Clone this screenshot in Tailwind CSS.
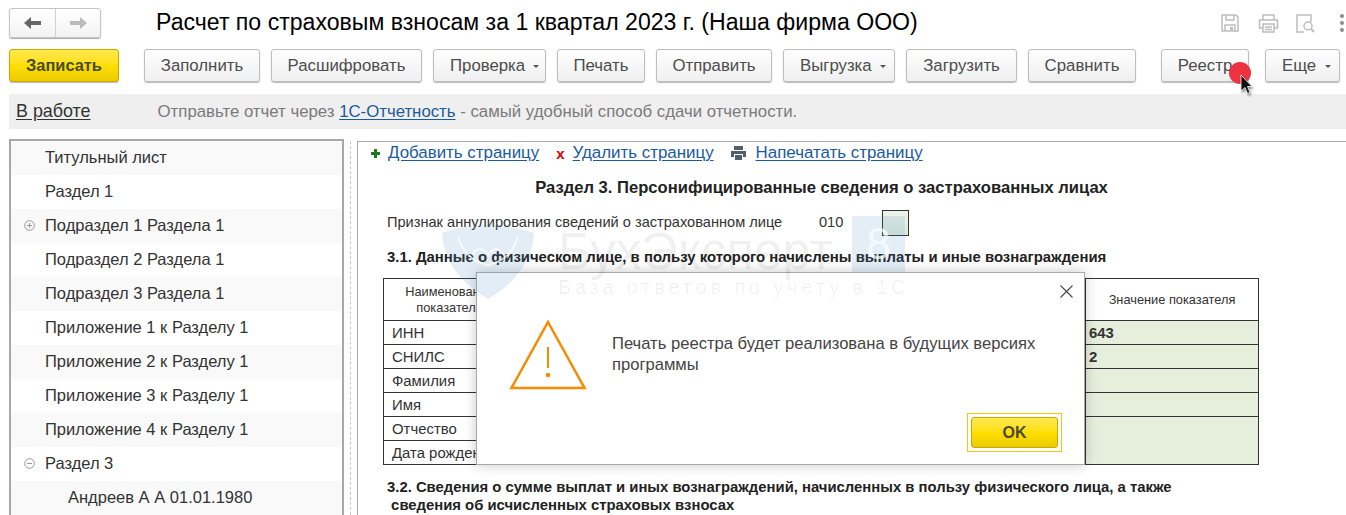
<!DOCTYPE html>
<html lang="ru">
<head>
<meta charset="utf-8">
<title>Расчет по страховым взносам</title>
<script src="https://cdn.jsdelivr.net/npm/@tailwindcss/browser@4"></script>
</head>
<body class="bg-white">
<div class="relative w-[1346px] h-[515px] overflow-hidden bg-white font-['Liberation_Sans',sans-serif] text-[#333]">

  <!-- title row -->
  <div class="flex items-center h-[49px] pl-[9px] pb-[3px]">
    <div class="flex w-[92px] h-[30px] rounded-[3px] border border-[#c4c4c4] shadow-[0_1px_1px_#aaa] bg-linear-to-b from-white to-[#f3f3f3]">
      <div class="w-[46px] flex items-center justify-center border-r border-[#d0d0d0]">
        <svg width="18" height="12" viewBox="0 0 18 12"><path d="M0 6 L7 0 V4 H17 V8 H7 V12 Z" fill="#666"/></svg>
      </div>
      <div class="flex-1 flex items-center justify-center">
        <svg width="18" height="12" viewBox="0 0 18 12"><path d="M18 6 L11 0 V4 H1 V8 H11 V12 Z" fill="#bbb"/></svg>
      </div>
    </div>
    <h1 class="ml-[55px] text-[23.100px] leading-none text-black whitespace-nowrap">Расчет по страховым взносам за 1 квартал 2023 г. (Наша фирма ООО)</h1>
    <div class="ml-auto flex items-center pr-[2px]">
      <svg class="mr-[18px]" width="20" height="18" viewBox="0 0 20 18" fill="none" stroke="#bdbdbd" stroke-width="1.5"><path d="M2 1 H16 L18 3 V17 H2 Z"/><path d="M6 1 V6 H14 V1"/><path d="M5 17 V11 H15 V17"/><rect x="10" y="13" width="3" height="3" fill="#bdbdbd" stroke="none"/></svg>
      <svg class="mr-[17px]" width="21" height="19" viewBox="0 0 21 19" fill="none" stroke="#bdbdbd" stroke-width="1.5"><path d="M5 6 V1 H16 V6"/><path d="M5 14 H1.500 V6 H19.500 V14 H16"/><path d="M5 10 H16 V18 H5 Z"/><path d="M7 13 H14 M7 15.500 H14"/></svg>
      <svg class="mr-[25px]" width="19" height="19" viewBox="0 0 19 19" fill="none" stroke="#bdbdbd" stroke-width="1.5"><path d="M8 18 H1 V1 H15 V8"/><circle cx="12" cy="12" r="4"/><path d="M15 15 L18 18" stroke-width="2"/></svg>
      <div class="flex flex-col gap-[3px]">
        <span class="block w-[4px] h-[4px] rounded-full bg-[#8c8c8c]"></span>
        <span class="block w-[4px] h-[4px] rounded-full bg-[#8c8c8c]"></span>
        <span class="block w-[4px] h-[4px] rounded-full bg-[#8c8c8c]"></span>
      </div>
    </div>
  </div>

  <!-- command bar -->
  <div class="flex h-[33px] pl-[9px] text-[16.800px] text-[#4d4d4d]">
    <button class="w-[110px] rounded-[3px] border border-[#c9a900] bg-linear-to-b from-[#ffe94a] via-[#ffdf00] to-[#eccb00] text-[16.400px] font-bold text-[#4a4a2a] shadow-[0_1px_1px_#bbb]">Записать</button>
    <button class="ml-[25px] w-[116px] rounded-[3px] border border-[#bdbdbd] bg-linear-to-b from-white to-[#efefef] shadow-[0_1px_1px_#bbb]">Заполнить</button>
    <button class="ml-[11px] w-[151px] rounded-[3px] border border-[#bdbdbd] bg-linear-to-b from-white to-[#efefef] shadow-[0_1px_1px_#bbb]">Расшифровать</button>
    <button class="ml-[11px] w-[113px] flex items-center pl-[16px] gap-[8px] rounded-[3px] border border-[#bdbdbd] bg-linear-to-b from-white to-[#efefef] shadow-[0_1px_1px_#bbb]">Проверка<span class="mt-[1px] border-x-[3px] border-t-[3px] border-x-transparent border-t-[#555]"></span></button>
    <button class="ml-[11px] w-[88px] rounded-[3px] border border-[#bdbdbd] bg-linear-to-b from-white to-[#efefef] shadow-[0_1px_1px_#bbb]">Печать</button>
    <button class="ml-[11px] w-[116px] rounded-[3px] border border-[#bdbdbd] bg-linear-to-b from-white to-[#efefef] shadow-[0_1px_1px_#bbb]">Отправить</button>
    <button class="ml-[11px] w-[112px] flex items-center pl-[16px] gap-[8px] rounded-[3px] border border-[#bdbdbd] bg-linear-to-b from-white to-[#efefef] shadow-[0_1px_1px_#bbb]">Выгрузка<span class="mt-[1px] border-x-[3px] border-t-[3px] border-x-transparent border-t-[#555]"></span></button>
    <button class="ml-[11px] w-[111px] rounded-[3px] border border-[#bdbdbd] bg-linear-to-b from-white to-[#efefef] shadow-[0_1px_1px_#bbb]">Загрузить</button>
    <button class="ml-[11px] w-[108px] rounded-[3px] border border-[#bdbdbd] bg-linear-to-b from-white to-[#efefef] shadow-[0_1px_1px_#bbb]">Сравнить</button>
    <button class="ml-[25px] w-[88px] rounded-[3px] border border-[#bdbdbd] bg-linear-to-b from-white to-[#efefef] shadow-[0_1px_1px_#bbb]">Реестр</button>
    <button class="ml-[16px] w-[75px] flex items-center pl-[16px] gap-[9px] rounded-[3px] border border-[#bdbdbd] bg-linear-to-b from-white to-[#efefef] shadow-[0_1px_1px_#bbb]">Еще<span class="mt-[1px] border-x-[3px] border-t-[3px] border-x-transparent border-t-[#555]"></span></button>
  </div>

  <!-- status bar -->
  <div class="flex items-center h-[35px] mt-[12px] ml-[9px] pl-[7px] bg-[#efefef] whitespace-nowrap">
    <a class="text-[17.900px] underline underline-offset-2 text-[#333]">В работе</a>
    <p class="ml-[67px] text-[16.800px] text-[#7a7a7a]">Отправьте отчет через <a class="text-[#1a5a9e] underline underline-offset-2">1С-Отчетность</a> - самый удобный способ сдачи отчетности.</p>
  </div>

  <!-- main area -->
  <div class="flex mt-[10px] ml-[9px]">
    <!-- tree -->
    <ul class="w-[335px] h-[376px] shrink-0 border-x-2 border-t-2 border-[#a8a8a8] text-[16.500px] text-[#333]">
      <li class="h-[34px] flex items-center pl-[34px] pb-[2px] bg-[#f9f9f9]">Титульный лист</li>
      <li class="h-[34px] flex items-center pl-[34px] pb-[2px]">Раздел 1</li>
      <li class="h-[34px] flex items-center pl-[13px] pb-[2px] gap-[10px] bg-[#f9f9f9]">
        <svg width="11" height="11" viewBox="0 0 11 11" fill="none" stroke="#999"><circle cx="5.500" cy="5.500" r="4.800"/><path d="M3 5.500 H8 M5.500 3 V8"/></svg>Подраздел 1 Раздела 1</li>
      <li class="h-[34px] flex items-center pl-[34px] pb-[2px]">Подраздел 2 Раздела 1</li>
      <li class="h-[34px] flex items-center pl-[34px] pb-[2px] bg-[#f9f9f9]">Подраздел 3 Раздела 1</li>
      <li class="h-[34px] flex items-center pl-[34px] pb-[2px]">Приложение 1 к Разделу 1</li>
      <li class="h-[34px] flex items-center pl-[34px] pb-[2px] bg-[#f9f9f9]">Приложение 2 к Разделу 1</li>
      <li class="h-[34px] flex items-center pl-[34px] pb-[2px]">Приложение 3 к Разделу 1</li>
      <li class="h-[34px] flex items-center pl-[34px] pb-[2px] bg-[#f9f9f9]">Приложение 4 к Разделу 1</li>
      <li class="h-[34px] flex items-center pl-[13px] pb-[2px] gap-[10px]">
        <svg width="11" height="11" viewBox="0 0 11 11" fill="none" stroke="#999"><circle cx="5.500" cy="5.500" r="4.800"/><path d="M3 5.500 H8"/></svg>Раздел 3</li>
      <li class="h-[34px] flex items-center pl-[57px] pb-[2px] bg-[#f9f9f9]">Андреев А А 01.01.1980</li>
    </ul>

    <div class="ml-[6px] mt-[2px] h-[374px] border-l border-dashed border-[#c8c8c8]"></div>

    <!-- report -->
    <div class="ml-[6px] flex-1 h-[374px] mt-[2px] border-l border-t border-[#a8a8a8] pl-[12px] overflow-hidden">
      <div class="flex items-center h-[22px] text-[16.900px] whitespace-nowrap">
        <svg width="11" height="11" viewBox="0 0 11 11"><path d="M4 1 H7 V4 H10 V7 H7 V10 H4 V7 H1 V4 H4 Z" fill="#1c7a1c"/></svg>
        <a class="ml-[7px] text-[#1a5a9e] underline underline-offset-2">Добавить страницу</a>
        <span class="ml-[17px] text-[15px] font-bold text-[#e00000] leading-none">x</span>
        <a class="ml-[8px] text-[#1a5a9e] underline underline-offset-2">Удалить страницу</a>
        <svg class="ml-[17px]" width="15" height="14" viewBox="0 0 15 14"><path d="M3 0 H12 V4 H3 Z M0 5 H15 V11 H12 V8 H3 V11 H0 Z M4 9 H11 V14 H4 Z" fill="#4f5f6f"/></svg>
        <a class="ml-[10px] text-[#1a5a9e] underline underline-offset-2">Напечатать страницу</a>
      </div>
      <h2 class="mt-[15px] ml-[-1px] w-[905px] text-center font-bold text-[16.600px] leading-[18px] text-[#222] whitespace-nowrap">Раздел 3. Персонифицированные сведения о застрахованных лицах</h2>
      <div class="flex items-center h-[26px] mt-[13px] ml-[17px] text-[14.600px]">
        <span class="w-[432px] whitespace-nowrap">Признак аннулирования сведений о застрахованном лице</span>
        <span class="w-[63px]">010</span>
        <span class="w-[27px] h-[26px] border border-[#333] bg-linear-to-b from-[#eef2ea] to-[#dcebd9]"></span>
      </div>
      <h3 class="mt-[11px] ml-[17px] font-bold text-[14.900px] leading-[20px] text-[#222] whitespace-nowrap">3.1. Данные о физическом лице, в пользу которого начислены выплаты и иные вознаграждения</h3>
      <table class="mt-[11px] ml-[13px] w-[876px] table-fixed border-collapse border border-[#333] text-[14.900px] leading-[20px]">
        <colgroup><col class="w-[132px]"><col class="w-[570px]"><col></colgroup>
        <tr class="h-[42px] text-[12.800px] text-center leading-[16px]">
          <td class="border border-[#333]"><span class="block whitespace-nowrap">Наименование</span>показателя</td>
          <td class="border border-[#333]"></td>
          <td class="border border-[#333]">Значение показателя</td>
        </tr>
        <tr class="h-[24px]"><td class="border border-[#333] pl-[8px] pt-[1px]">ИНН</td><td class="border border-[#333]"></td><td class="border border-[#333] bg-[#e6eedc] pl-[3px] pt-[1px] font-bold">643</td></tr>
        <tr class="h-[24px]"><td class="border border-[#333] pl-[8px] pt-[1px]">СНИЛС</td><td class="border border-[#333]"></td><td class="border border-[#333] bg-[#e6eedc] pl-[3px] pt-[1px] font-bold">2</td></tr>
        <tr class="h-[24px]"><td class="border border-[#333] pl-[8px] pt-[1px]">Фамилия</td><td class="border border-[#333]"></td><td class="border border-[#333] bg-[#e6eedc]"></td></tr>
        <tr class="h-[24px]"><td class="border border-[#333] pl-[8px] pt-[1px]">Имя</td><td class="border border-[#333]"></td><td class="border border-[#333] bg-[#e6eedc]"></td></tr>
        <tr class="h-[24px]"><td class="border border-[#333] pl-[8px] pt-[1px]">Отчество</td><td class="border border-[#333]" rowspan="2"></td><td class="border border-[#333] bg-[#e6eedc]" rowspan="2"></td></tr>
        <tr class="h-[24px]"><td class="border border-[#333] pl-[8px] pt-[1px] whitespace-nowrap overflow-hidden">Дата рождения</td></tr>
      </table>
      <h3 class="mt-[13px] ml-[17px] font-bold text-[14.850px] leading-[18px] text-[#222] whitespace-pre">3.2. Сведения о сумме выплат и иных вознаграждений, начисленных в пользу физического лица, а также
 сведения об исчисленных страховых взносах</h3>
    </div>
  </div>

  <!-- message dialog -->
  <div class="absolute left-[476px] top-[272px] w-[609px] h-[193px] bg-white border border-[#a8a8a8] shadow-[0_0_12px_rgba(0,0,0,0.22)]">
    <svg class="absolute left-[32px] top-[47px]" width="78" height="70" viewBox="0 0 78 70" fill="none" stroke="#f98a00" stroke-width="2.500"><path d="M39 2 L75.500 68 H2.500 Z"/><path d="M39 27 V48" stroke-width="2"/><circle cx="39" cy="55" r="2.300" fill="#f98a00" stroke="none"/></svg>
    <p class="absolute left-[135px] top-[61px] w-[450px] text-[16.600px] leading-[20.500px] text-[#444]">Печать реестра будет реализована в будущих версиях программы</p>
    <svg class="absolute right-[11px] top-[12px]" width="13" height="13" viewBox="0 0 13 13" stroke="#444" stroke-width="1.100"><path d="M0.500 0.500 L12.500 12.500 M12.500 0.500 L0.500 12.500"/></svg>
    <div class="absolute left-[490px] top-[140px] w-[95px] h-[39px] border border-[#f5c518] p-[3px]">
      <button class="block w-full h-full rounded-[3px] border border-[#c9a900] bg-linear-to-b from-[#ffe94a] via-[#ffdf00] to-[#eccb00] font-bold text-[16px] text-[#4a4a2a]">OK</button>
    </div>
  </div>

  <!-- watermark -->
  <div class="absolute left-[430px] top-[205px] w-[490px] h-[100px] pointer-events-none">
    <svg class="absolute left-[12px] top-[20px]" width="92" height="74" viewBox="0 0 92 74"><path d="M0 8 Q46 -8 92 8 Q90 48 46 74 Q2 48 0 8 Z" fill="#4a90c8" fill-opacity="0.16"/><path d="M16 12 Q24 36 46 40 Q68 36 76 12 M30 30 Q38 18 46 30 Q54 18 62 30" fill="none" stroke="#fff" stroke-opacity="0.7" stroke-width="2"/></svg>
    <span class="absolute left-[128px] top-[18px] text-[51px] leading-[58px] text-black/[0.06] whitespace-nowrap">БухЭксперт</span>
    <span class="absolute left-[422px] top-[11px] w-[53px] h-[56px] flex items-center justify-center bg-[#4a90c8]/15 text-white/70 text-[44px]">8</span>
    <span class="absolute left-[128px] top-[70px] text-[20px] leading-[24px] tracking-[3.800px] text-black/[0.06] whitespace-nowrap">База ответов по учёту в 1С</span>
  </div>

  <!-- cursor -->
  <span class="absolute left-[1229px] top-[62px] w-[22px] h-[22px] rounded-full bg-[#ee3340]"></span>
  <svg class="absolute left-[1240px] top-[74px] drop-shadow-[1px_2px_1px_rgba(0,0,0,0.45)]" width="13" height="21" viewBox="0 0 13 21"><path d="M1 1 V17 L5 13.500 L7.500 19.500 L10 18.500 L7.500 12.500 H12 Z" fill="#111" stroke="#fff" stroke-width="0.800"/></svg>
</div>
</body>
</html>
